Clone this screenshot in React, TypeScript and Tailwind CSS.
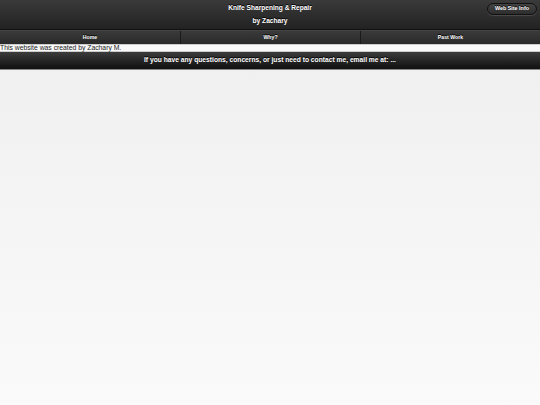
import React from 'react';

const App = () => {
  return (
    <div
      className="w-[540px] h-[405px] overflow-hidden flex flex-col bg-gradient-to-b from-[#eeeeee] to-[#fafafa]"
      style={{ fontFamily: '"Liberation Sans", Arial, sans-serif' }}
    >
      {/* Header */}
      <header className="relative h-[30px] bg-gradient-to-b from-[#3a3a3a] to-[#222] border-b border-[#111] text-white">
        <div className="flex flex-col items-center pt-[3px] text-[6.6px] font-bold leading-[9px] [text-shadow:0_-1px_0_#000]">
          <span>Knife Sharpening &amp; Repair</span>
          <span className="mt-[4px]">by Zachary</span>
        </div>
        <button className="absolute right-[3px] top-[3px] h-[12px] px-[7px] rounded-full border border-[#111] bg-gradient-to-b from-[#444] to-[#2d2d2d] text-[5.4px] font-bold text-white leading-none [text-shadow:0_-1px_0_#000] shadow-[0_1px_1px_rgba(255,255,255,0.15)]">
          Web Site Info
        </button>
      </header>

      {/* Navbar */}
      <nav className="grid grid-cols-3 h-[14px] border-t border-[#444] bg-gradient-to-b from-[#3a3a3a] to-[#2a2a2a] text-white text-[5.2px] font-bold [text-shadow:0_-1px_0_#000]">
        <div className="flex items-center justify-center">Home</div>
        <div className="flex items-center justify-center border-l border-[#1a1a1a]">Why?</div>
        <div className="flex items-center justify-center border-l border-[#1a1a1a]">Past Work</div>
      </nav>

      {/* Content */}
      <div className="h-[8px] bg-[#f9f9f9] border-y border-[#ccc] text-[6.8px] leading-[6px] text-[#222]">
        This website was created by Zachary M.
      </div>

      {/* Footer */}
      <footer className="h-[18px] flex items-center justify-center bg-gradient-to-b from-[#3c3c3c] to-[#111] border-b border-[#888] text-white text-[6.7px] font-bold [text-shadow:0_-1px_0_#000]">
        If you have any questions, concerns, or just need to contact me, email me at: ...
      </footer>

      <div className="flex-1" />
    </div>
  );
};

export default App;
